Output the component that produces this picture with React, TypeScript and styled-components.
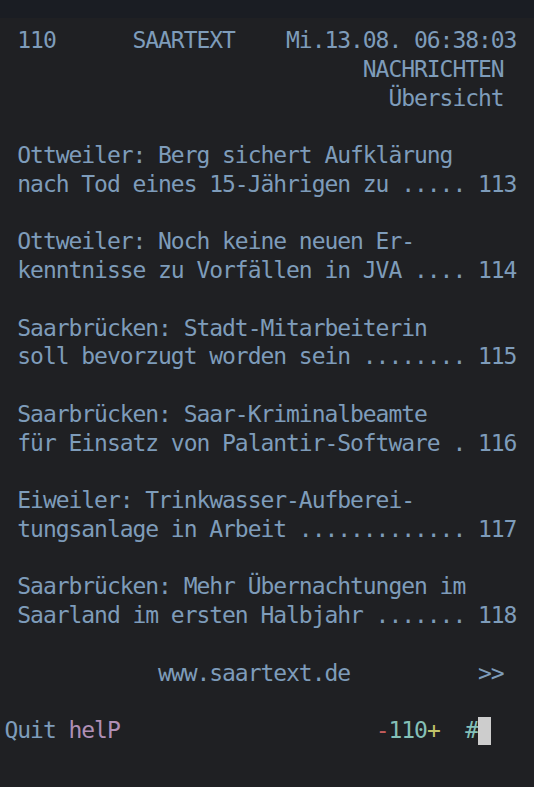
import React from "react";
import styled, { createGlobalStyle } from "styled-components";

const GlobalStyle = createGlobalStyle`
    html, body {
        margin: 0;
        padding: 0;
        background-color: #1f2023;
    }
`;

type Story = { first: string, second: string, page: number };

const stories : Story[] = [
    { first: "Ottweiler: Berg sichert Aufklärung", second: "nach Tod eines 15-Jährigen zu", page: 113 },
    { first: "Ottweiler: Noch keine neuen Er-", second: "kenntnisse zu Vorfällen in JVA", page: 114 },
    { first: "Saarbrücken: Stadt-Mitarbeiterin", second: "soll bevorzugt worden sein", page: 115 },
    { first: "Saarbrücken: Saar-Kriminalbeamte", second: "für Einsatz von Palantir-Software", page: 116 },
    { first: "Eiweiler: Trinkwasser-Aufberei-", second: "tungsanlage in Arbeit", page: 117 },
    { first: "Saarbrücken: Mehr Übernachtungen im", second: "Saarland im ersten Halbjahr", page: 118 },
];

// pad the second line with dots so the page number ends in the last of 40 columns
function withDots(text : string, page : number) {
    const dots = 34 - text.length;
    return `${text} ${".".repeat(dots)} ${page}`;
}

function App() {
    return (
        <>
            <GlobalStyle />
            <Window>
                <TitleBar />
                <Terminal>
                    <Line>{" 110      SAARTEXT    Mi.13.08. 06:38:03"}</Line>
                    <Line>{"                            NACHRICHTEN"}</Line>
                    <Line>{"                              Übersicht"}</Line>
                    <Line />
                    {stories.map((story : Story) => (
                        <StoryBlock key={story.page}>
                            <Line>{" " + story.first}</Line>
                            <Line>{" " + withDots(story.second, story.page)}</Line>
                            <Line />
                        </StoryBlock>
                    ))}
                    <Line>{"            www.saartext.de          >>"}</Line>
                    <Line />
                    <Line>
                        <Key $color="#7e9cba">Quit</Key>
                        {" "}
                        <Key $color="#b08fb6">helP</Key>
                        {"                    "}
                        <Key $color="#c45c5c">-</Key>
                        <Key $color="#84c0b8">110</Key>
                        <Key $color="#c2c46a">+</Key>
                        {"  "}
                        <Key $color="#84c0b8">#</Key>
                        <Cursor />
                    </Line>
                </Terminal>
            </Window>
        </>
    );
}

const Window = styled.div`
    display: flex;
    flex-direction: column;
    width: 534px;
    min-height: 787px;
    background-color: #1f2023;
`;

const TitleBar = styled.div`
    height: 18px;
    background-color: #1a1d23;
`;

const Terminal = styled.div`
    display: flex;
    flex-direction: column;
    padding: 8px 0 0 4.5px;
    font-family: "DejaVu Sans Mono", monospace;
    font-size: 23px;
    letter-spacing: -1.05px;
    color: #7e9cba;
`;

const StoryBlock = styled.div`
    display: flex;
    flex-direction: column;
`;

const Line = styled.div`
    height: 28.75px;
    line-height: 28.75px;
    white-space: pre;
`;

const Key = styled.span<{ $color : string }>`
    color: ${props => props.$color};
`;

const Cursor = styled.span`
    display: inline-block;
    width: 12.8px;
    height: 28px;
    vertical-align: top;
    margin-top: 1px;
    background-color: #cdcdcd;
`;

export default App;
